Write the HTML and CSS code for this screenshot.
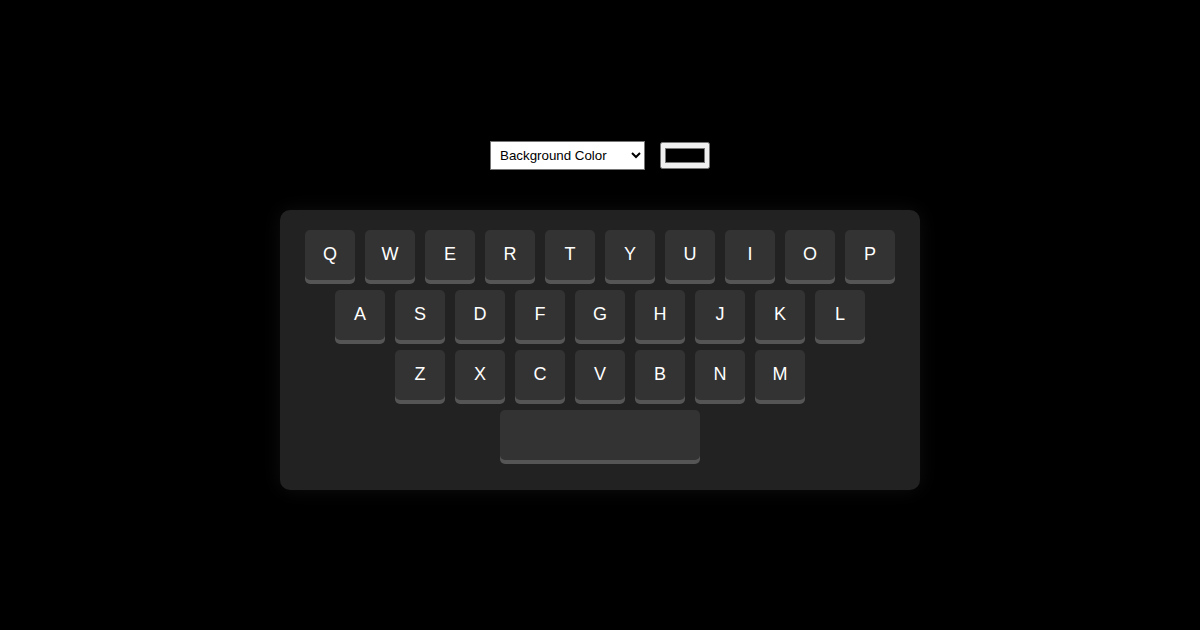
FILE: index.html
```html
<!DOCTYPE html>
<html>
<head>
<meta charset="utf-8">
<link rel="stylesheet" href="styles.css">
</head>
<body>
<div class="controls">
  <select class="picker">
    <option>Background Color</option>
    <option>Key Color</option>
    <option>Text Color</option>
  </select>
  <input type="color" class="swatch" value="#000000">
</div>
<div class="keyboard">
  <div class="row">
    <div class="key">Q</div><div class="key">W</div><div class="key">E</div><div class="key">R</div><div class="key">T</div><div class="key">Y</div><div class="key">U</div><div class="key">I</div><div class="key">O</div><div class="key">P</div>
  </div>
  <div class="row">
    <div class="key">A</div><div class="key">S</div><div class="key">D</div><div class="key">F</div><div class="key">G</div><div class="key">H</div><div class="key">J</div><div class="key">K</div><div class="key">L</div>
  </div>
  <div class="row">
    <div class="key">Z</div><div class="key">X</div><div class="key">C</div><div class="key">V</div><div class="key">B</div><div class="key">N</div><div class="key">M</div>
  </div>
  <div class="row">
    <div class="key space"></div>
  </div>
</div>
</body>
</html>
```

FILE: styles.css
```css
html, body {
  margin: 0;
  padding: 0;
}
body {
  background: #000;
  height: 100vh;
  display: flex;
  flex-direction: column;
  align-items: center;
  justify-content: center;
  font-family: "Liberation Sans", Arial, sans-serif;
}
.controls {
  display: flex;
  align-items: center;
  gap: 15px;
  margin-bottom: 40px;
}
.picker {
  font-family: "Liberation Sans", Arial, sans-serif;
  font-size: 13.333px;
  padding: 5px;
  width: 155px;
  height: 29px;
  background: #fff;
  color: #000;
  border: 1px solid #767676;
}
.swatch {
  width: 50px;
  height: 27px;
}
.keyboard {
  background: #222;
  border-radius: 10px;
  padding: 20px;
  width: 600px;
  box-shadow: 0 0 20px rgba(255, 255, 255, 0.06);
}
.row {
  display: flex;
  justify-content: center;
  gap: 10px;
  margin-bottom: 10px;
}
.key {
  width: 50px;
  height: 50px;
  background: #333;
  color: #fff;
  border-radius: 5px;
  box-shadow: 0 4px 0 #555;
  display: flex;
  align-items: center;
  justify-content: center;
  font-size: 18px;
}
.key.space {
  width: 200px;
}
```
